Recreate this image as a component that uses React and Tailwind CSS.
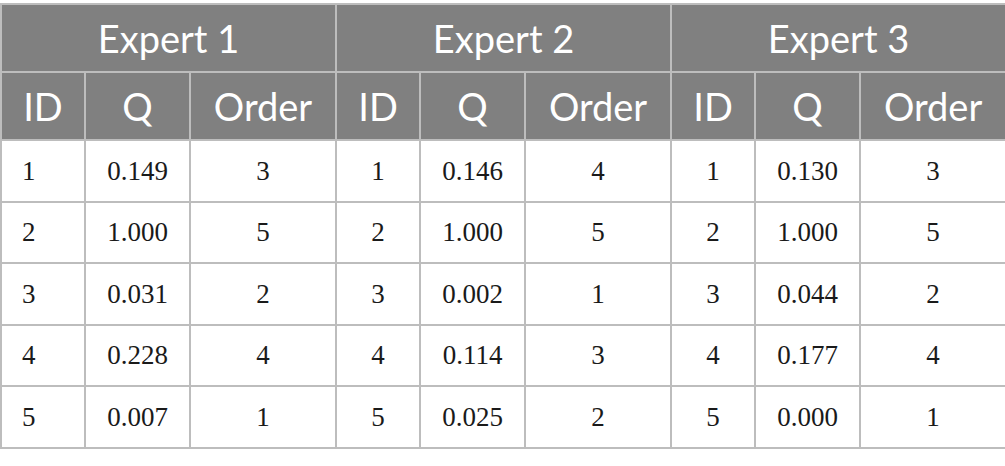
export default function App() {
  const experts = [
    { name: 'Expert 1', rows: [['0.149', 3], ['1.000', 5], ['0.031', 2], ['0.228', 4], ['0.007', 1]] },
    { name: 'Expert 2', rows: [['0.146', 4], ['1.000', 5], ['0.002', 1], ['0.114', 3], ['0.025', 2]] },
    { name: 'Expert 3', rows: [['0.130', 3], ['1.000', 5], ['0.044', 2], ['0.177', 4], ['0.000', 1]] },
  ];

  const head = 'border-2 border-[#bdbdbd] bg-[#808080] text-white font-normal text-center';
  const cell = 'border-2 border-[#bdbdbd] text-[27px] text-[#1a1a1a]';

  return (
    <div className="w-[1005px] h-[466px] bg-white pt-[3px]">
      <table className="w-[1004px] table-fixed border-collapse">
        <colgroup>
          {experts.map((e) => (
            <>
              <col key={e.name + 'id'} className="w-[84px]" />
              <col key={e.name + 'q'} className="w-[105px]" />
              <col key={e.name + 'o'} className="w-[146px]" />
            </>
          ))}
        </colgroup>
        <thead style={{ fontFamily: 'Lato, "Open Sans", sans-serif' }}>
          <tr className="h-[68px]">
            {experts.map((e) => (
              <th key={e.name} colSpan={3} className={`${head} text-[38px]`}>
                {e.name}
              </th>
            ))}
          </tr>
          <tr className="h-[68px]">
            {experts.map((e) => (
              <>
                <th key={e.name + 'id'} className={`${head} text-[38px]`}>ID</th>
                <th key={e.name + 'q'} className={`${head} text-[38px]`}>Q</th>
                <th key={e.name + 'o'} className={`${head} text-[38px]`}>Order</th>
              </>
            ))}
          </tr>
        </thead>
        <tbody style={{ fontFamily: '"Liberation Serif", "Times New Roman", serif' }}>
          {[0, 1, 2, 3, 4].map((i) => (
            <tr key={i} className="h-[61.5px]">
              {experts.map((e, k) => (
                <>
                  <td key={e.name + 'id'} className={`${cell} ${k === 0 ? 'text-left pl-[20px]' : 'text-center'}`}>
                    {i + 1}
                  </td>
                  <td key={e.name + 'q'} className={`${cell} text-center`}>{e.rows[i][0]}</td>
                  <td key={e.name + 'o'} className={`${cell} text-center`}>{e.rows[i][1]}</td>
                </>
              ))}
            </tr>
          ))}
        </tbody>
      </table>
    </div>
  );
}
